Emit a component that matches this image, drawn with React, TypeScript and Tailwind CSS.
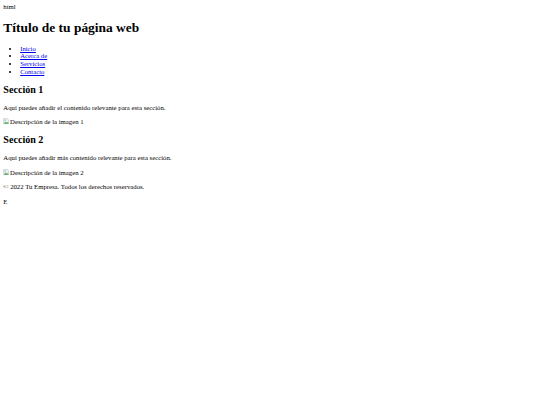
import React from 'react';

const BrokenImage: React.FC<{ alt: string }> = ({ alt }) => (
  <>
    <svg viewBox="0 0 16 16" className="inline-block w-[6.7px] h-[6.7px] align-[-0.5px]" aria-hidden="true">
      <path d="M1.5 1.5h9l3 3v9h-12z" fill="#eef3f8" stroke="#a0a0a0" />
      <path d="M2 13.5l4-5 3 3 2-2 2.5 4z" fill="#4caf50" />
      <circle cx="5" cy="5" r="1.4" fill="#5b9bd5" />
    </svg>
    {alt}
  </>
);

const Section: React.FC<{ title: string; text: string; alt: string }> = ({ title, text, alt }) => (
  <section>
    <h2 className="text-[10.08px] leading-[11.6px] font-bold my-[8.37px]">{title}</h2>
    <p className="my-[6.72px]">{text}</p>
    <p className="my-[6.72px] h-[7.73px]">
      <BrokenImage alt={alt} />
    </p>
  </section>
);

export default function App() {
  const links = ['Inicio', 'Acerca de', 'Servicios', 'Contacto'];

  return (
    <div
      className="min-h-[405px] bg-white text-black p-[3.36px] text-[6.72px] leading-[7.73px]"
      style={{ fontFamily: '"Liberation Serif", "Times New Roman", serif' }}
    >
      <div>html</div>
      <header>
        <h1 className="text-[13.44px] leading-[15.46px] font-bold my-[9px]">Título de tu página web</h1>
        <nav>
          <ul className="list-disc pl-[16.8px] my-[6.72px]">
            {links.map((l) => (
              <li key={l}>
                <a href="#" className="text-[#0000ee] underline">
                  {l}
                </a>
              </li>
            ))}
          </ul>
        </nav>
      </header>
      <main>
        <Section
          title="Sección 1"
          text="Aquí puedes añadir el contenido relevante para esta sección."
          alt="Descripción de la imagen 1"
        />
        <Section
          title="Sección 2"
          text="Aquí puedes añadir más contenido relevante para esta sección."
          alt="Descripción de la imagen 2"
        />
      </main>
      <footer>
        <p className="my-[6.72px]">© 2022 Tu Empresa. Todos los derechos reservados.</p>
      </footer>
      <p className="my-[6.72px]">E</p>
    </div>
  );
}
